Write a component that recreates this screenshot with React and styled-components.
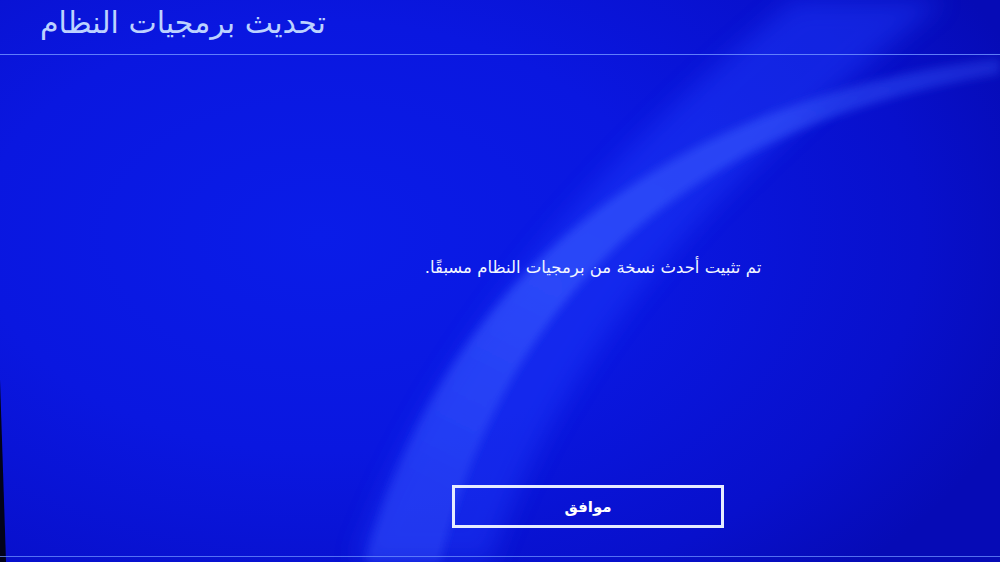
import React from 'react'
import styled, { createGlobalStyle } from 'styled-components'

const GlobalStyle = createGlobalStyle`
  html, body {
    margin: 0;
    padding: 0;
    background: #0610c4;
  }
  body {
    font-family: "DejaVu Sans", "Noto Sans", sans-serif;
  }
`

const Screen = styled.div`
  position: relative;
  width: 100%;
  height: 562px;
  overflow: hidden;
  display: flex;
  flex-direction: column;
  background: radial-gradient(
    ellipse 75% 85% at 32% 42%,
    #0a1ce8 0%,
    #0a17e0 45%,
    #0810cc 80%,
    #060bb6 100%
  );
`

const Backdrop = styled.svg`
  position: absolute;
  inset: 0;
  width: 100%;
  height: 100%;
  pointer-events: none;
`

const Header = styled.header`
  position: relative;
  height: 54px;
  flex: none;
  display: flex;
  align-items: center;
  padding-left: 40px;
  border-bottom: 1px solid rgba(110, 145, 255, 0.85);
`

const Title = styled.h1`
  margin: 0 0 10px;
  font-family: "DejaVu Sans", sans-serif;
  font-weight: normal;
  font-size: 30px;
  color: #bcd2ff;
`

const Body = styled.main`
  position: relative;
  flex: 1;
  display: flex;
  flex-direction: column;
  align-items: center;
  padding-left: 176px;
`

const Message = styled.p`
  margin: 203px 0 0 10px;
  font-size: 16.5px;
  line-height: 20px;
  color: #f2f6ff;
`

const OkButton = styled.button`
  margin-top: 207px;
  width: 272px;
  height: 43px;
  box-sizing: border-box;
  border: 3px solid #e6ecff;
  background: transparent;
  color: #ffffff;
  font-family: "DejaVu Sans", sans-serif;
  font-weight: bold;
  font-size: 15px;
  padding: 0;
  cursor: pointer;
`

const Footer = styled.footer`
  position: relative;
  height: 5px;
  flex: none;
  border-top: 1px solid rgba(110, 145, 255, 0.75);
`

export default function App() {
  return (
    <>
      <GlobalStyle />
      <Screen>
        <Backdrop viewBox="0 0 1000 562" preserveAspectRatio="none">
          <defs>
            <filter id="soft" x="-20%" y="-20%" width="140%" height="140%">
              <feGaussianBlur stdDeviation="4" />
            </filter>
            <filter id="softer" x="-20%" y="-20%" width="140%" height="140%">
              <feGaussianBlur stdDeviation="12" />
            </filter>
            <linearGradient id="stripe" x1="0.35" y1="1" x2="1" y2="0">
              <stop offset="0" stopColor="#3a5cff" stopOpacity="0.35" />
              <stop offset="0.35" stopColor="#3a5cff" stopOpacity="0.6" />
              <stop offset="0.75" stopColor="#3a5cff" stopOpacity="0.55" />
              <stop offset="1" stopColor="#3a5cff" stopOpacity="0.3" />
            </linearGradient>
          </defs>
          <path
            d="M 355 562 C 420 380, 560 190, 795 0 L 945 0 C 730 170, 570 330, 490 562 Z"
            fill="#2040ff"
            opacity="0.42"
            filter="url(#softer)"
          />
          <path
            d="M 365 562 C 420 360, 580 110, 1000 58 L 1000 74 C 660 130, 500 320, 440 562 Z"
            fill="url(#stripe)"
            filter="url(#soft)"
          />
          <path d="M 0 380 L 6 562 L 0 562 Z" fill="#02031a" />
        </Backdrop>
        <Header>
          <Title dir="rtl">تحديث برمجيات النظام</Title>
        </Header>
        <Body>
          <Message dir="rtl">تم تثبيت أحدث نسخة من برمجيات النظام مسبقًا.</Message>
          <OkButton dir="rtl">موافق</OkButton>
        </Body>
        <Footer />
      </Screen>
    </>
  )
}
